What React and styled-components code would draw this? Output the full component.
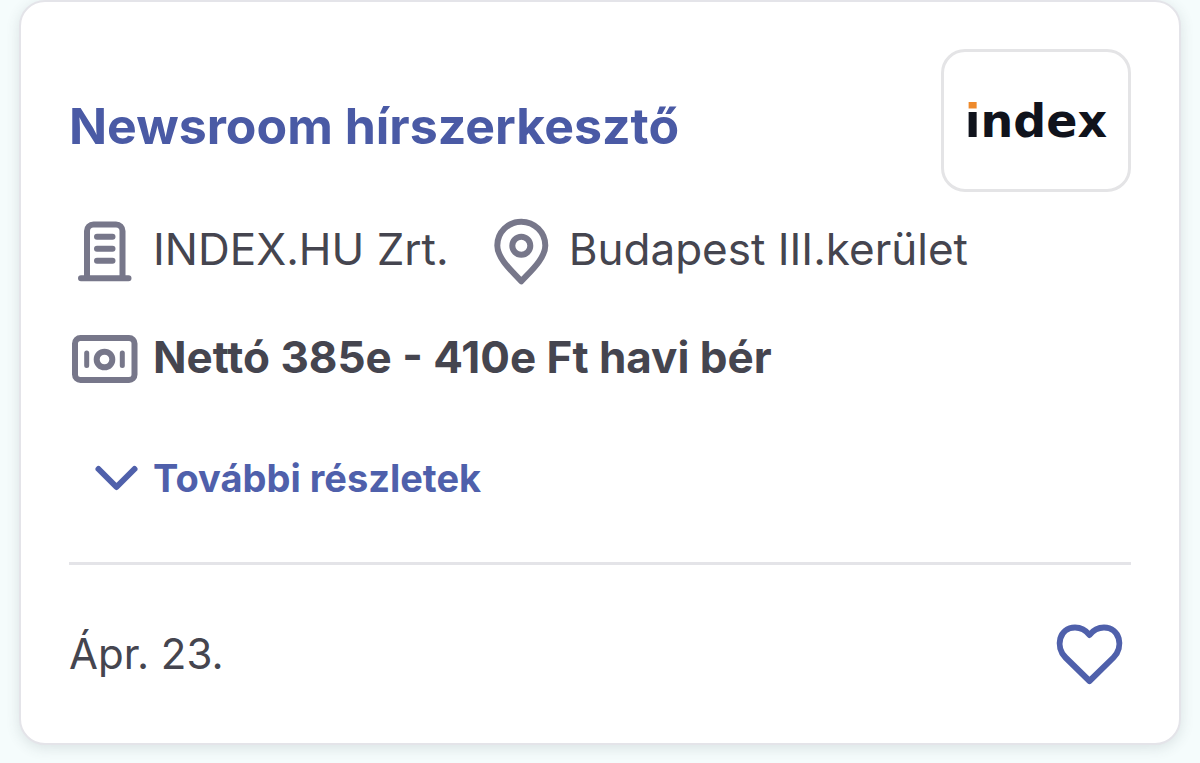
import React, { useState } from "react";
import styled, { createGlobalStyle } from "styled-components";

const GlobalStyle = createGlobalStyle`
  * {
    box-sizing: border-box;
  }
  body {
    margin: 0;
    background: #f5fcfc;
    color: #45454f;
    font-family: Inter, "Open Sans", sans-serif;
  }
`;

const Page = styled.main`
  padding: 0 19px 18px;
`;

const Card = styled.article`
  padding: 47px 48px 0;
  background: #fff;
  border: 2px solid #e4e4e9;
  border-radius: 26px;
  box-shadow: 0 3px 14px rgba(60, 70, 80, 0.14);
`;

const CardHeader = styled.header`
  display: flex;
  align-items: center;
  justify-content: space-between;
  gap: 24px;
`;

const Title = styled.h2`
  margin: 0;
  padding-top: 10px;
  font-size: 50px;
  line-height: 64px;
  font-weight: 700;

  a {
    color: #4a5aa5;
    text-decoration: none;
  }
`;

const LogoBox = styled.div`
  flex: none;
  display: flex;
  align-items: center;
  justify-content: center;
  width: 190px;
  height: 143px;
  border: 3px solid #e4e4e6;
  border-radius: 24px;
`;

const LogoText = styled.span`
  color: #10131c;
  font-family: "DejaVu Sans", sans-serif;
  font-size: 46px;
  line-height: 52px;
  font-weight: 700;
`;

// the dot of the i is orange, the stem keeps the logo colour
const LogoLetter = styled.span`
  color: transparent;
  background: linear-gradient(#ee8a2c 33%, #10131c 33%);
  background-clip: text;
`;

const InfoRow = styled.div`
  display: flex;
  flex-wrap: wrap;
  gap: 36px;
  margin-top: ${(props) => props.$top};
`;

const Info = styled.div`
  display: flex;
  align-items: center;
  gap: 12px;
  font-size: 44px;
  line-height: 52px;
  font-weight: ${(props) => (props.$bold ? 700 : 400)};
`;

const InfoText = styled.span`
  padding-bottom: 6px;
`;

const Icon = styled.svg`
  flex: none;
  width: 72px;
  height: 72px;
  fill: none;
  stroke: #77778a;
  stroke-width: 6;
  stroke-linecap: round;
  stroke-linejoin: round;
`;

const DetailsButton = styled.button`
  display: flex;
  align-items: center;
  gap: 12px;
  height: 60px;
  margin: 52px 0 54px;
  padding: 0 0 0 24px;
  border: 0;
  background: none;
  color: #4f60ab;
  font: inherit;
  font-size: 38px;
  line-height: 48px;
  font-weight: 700;
  cursor: pointer;
`;

const Chevron = styled.svg`
  flex: none;
  width: 48px;
  height: 48px;
  fill: none;
  stroke: currentColor;
  stroke-width: 6;
  stroke-linecap: round;
  stroke-linejoin: round;
  transform: ${(props) => (props.$open ? "rotate(180deg)" : "none")};
`;

const CardFooter = styled.footer`
  display: flex;
  align-items: center;
  justify-content: space-between;
  padding: 53px 0;
  border-top: 3px solid #e4e4e8;
`;

const PostedDate = styled.time`
  font-size: 42px;
  line-height: 52px;
`;

const SaveButton = styled.button`
  display: flex;
  padding: 0;
  border: 0;
  background: none;
  color: #4f60ab;
  cursor: pointer;

  svg {
    width: 84px;
    height: 72px;
    fill: ${(props) => (props.$saved ? "currentColor" : "none")};
    stroke: currentColor;
    stroke-width: 6;
    stroke-linejoin: round;
  }
`;

const App = () => {
  const [open, setOpen] = useState(false);
  const [saved, setSaved] = useState(false);

  return (
    <>
      <GlobalStyle />
      <Page>
        <Card>
          <CardHeader>
            <Title>
              <a href="#job">Newsroom hírszerkesztő</a>
            </Title>
            <LogoBox>
              <LogoText>
                <LogoLetter>i</LogoLetter>ndex
              </LogoText>
            </LogoBox>
          </CardHeader>

          <InfoRow $top="24px">
            <Info>
              <Icon viewBox="0 0 72 72" aria-hidden="true">
                <path d="M18 62V15a6.500 6.500 0 0 1 6.500-6.500h22.500a6.500 6.500 0 0 1 6.500 6.500V62M12 62.300h47.500" />
                <path d="M28 20.700h15.500M28 32.700h15.500M28 44.700h15.500" />
              </Icon>
              <InfoText>INDEX.HU Zrt.</InfoText>
            </Info>
            <Info>
              <Icon viewBox="0 0 72 72" aria-hidden="true">
                <path d="M36.300 65.300C29 57 12.300 43 12.300 29.500a24 23.800 0 0 1 48 0C60.300 43 43.600 57 36.300 65.300z" />
                <circle cx="36.300" cy="29.700" r="9" />
              </Icon>
              <InfoText>Budapest III.kerület</InfoText>
            </Info>
          </InfoRow>

          <InfoRow $top="36px">
            <Info $bold>
              <Icon viewBox="0 0 72 72" aria-hidden="true">
                <rect x="6" y="14" width="59.500" height="42" rx="5.500" />
                <circle cx="35.500" cy="35.500" r="7.800" />
                <path strokeWidth="5" d="M17.700 29v12.500M53.300 29v12.500" />
              </Icon>
              <InfoText>Nettó 385e - 410e Ft havi bér</InfoText>
            </Info>
          </InfoRow>

          <DetailsButton
            type="button"
            aria-expanded={open}
            onClick={() => setOpen(!open)}
          >
            <Chevron $open={open} viewBox="0 0 48 48" aria-hidden="true">
              <path d="M5.500 15l18 18 18-18" />
            </Chevron>
            További részletek
          </DetailsButton>

          <CardFooter>
            <PostedDate>Ápr. 23.</PostedDate>
            <SaveButton
              type="button"
              aria-label="Mentés"
              aria-pressed={saved}
              $saved={saved}
              onClick={() => setSaved(!saved)}
            >
              <svg viewBox="0 0 84 72" aria-hidden="true">
                <path d="M42.500 63L18.500 39.500C8 29 12 9.500 28 9.500c6.500 0 11 3 14.500 7.500 3.500-4.500 8-7.500 14.500-7.500 16 0 20 19.500 9.500 30z" />
              </svg>
            </SaveButton>
          </CardFooter>
        </Card>
      </Page>
    </>
  );
};

export default App;
